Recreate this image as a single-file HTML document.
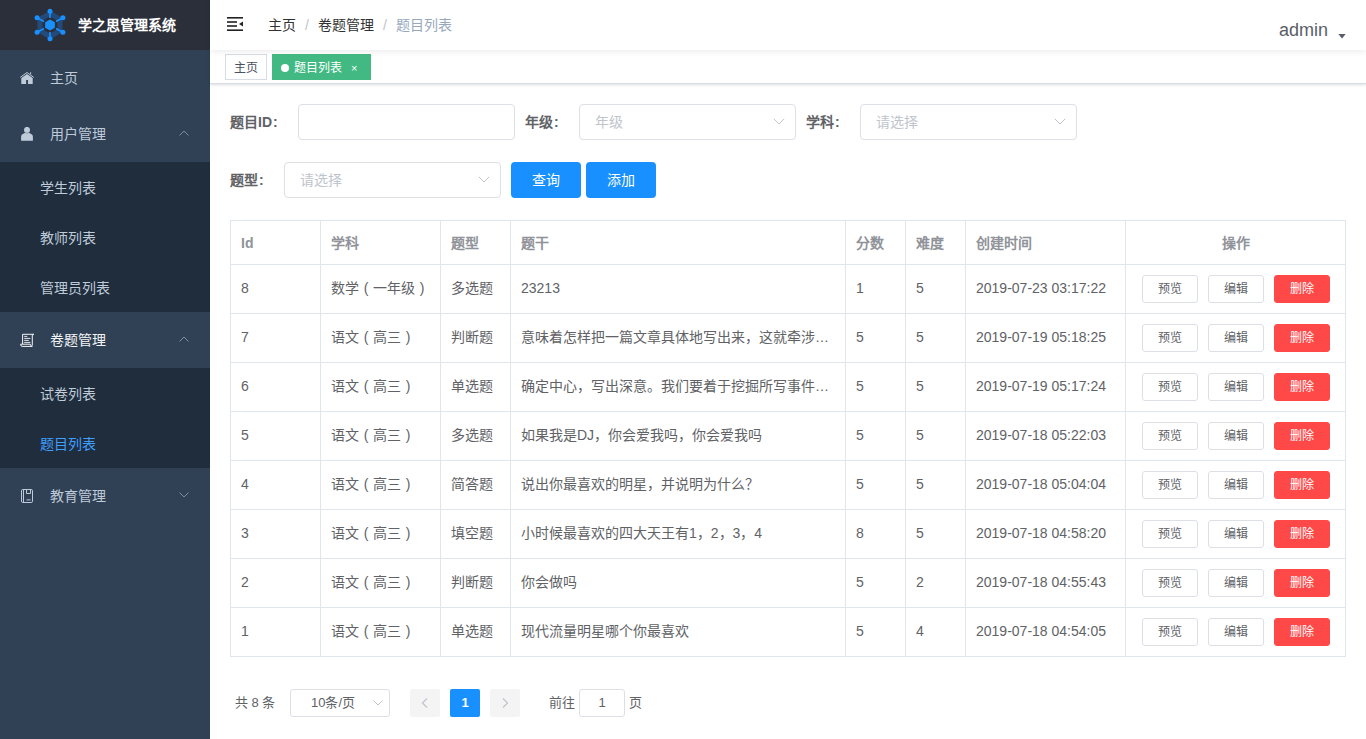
<!DOCTYPE html>
<html lang="zh-CN"><head><meta charset="utf-8"><title>题目列表</title>
<style>
*{box-sizing:border-box;margin:0;padding:0}
html,body{width:1366px;height:739px;overflow:hidden;background:#fff;font-family:"Liberation Sans",sans-serif;-webkit-font-smoothing:antialiased}
.abs{position:absolute}
#sb{position:absolute;left:0;top:0;width:210px;height:739px;background:#304156}
#logo{position:absolute;left:0;top:0;width:210px;height:50px;background:#2b2f3a}
#logo .t{position:absolute;left:78px;top:0;line-height:50px;color:#fff;font-weight:bold;font-size:14px;white-space:nowrap}
.mi{position:absolute;left:0;width:210px;height:56px;line-height:56px;font-size:14px;color:#bfcbd9;white-space:nowrap}
.mi .tx{position:absolute;left:50px;top:0}
.mi svg{position:absolute;left:20px;top:21px}
.mi .ar{position:absolute;left:179px;top:24px}
.si{position:absolute;left:0;width:210px;height:50px;line-height:50px;font-size:14px;color:#bfcbd9;background:#1f2d3d;white-space:nowrap}
.si .tx{position:absolute;left:40px;top:1px}
#nav{position:absolute;z-index:2;left:210px;top:0;width:1156px;height:50px;background:#fff;box-shadow:0 2px 6px rgba(0,21,41,.07)}
#tags{position:absolute;left:210px;top:50px;width:1156px;height:34px;background:#fff;border-bottom:1px solid #d8dce5;box-shadow:0 1px 3px 0 rgba(0,0,0,.12),0 0 3px 0 rgba(0,0,0,.04)}
.tag{position:absolute;top:4px;height:26px;line-height:26px;border:1px solid #d8dce5;font-size:12px;color:#495060;background:#fff;white-space:nowrap}
.tag.act{background:#42b983;border-color:#42b983;color:#fff}
.lbl{position:absolute;font-size:14px;font-weight:bold;color:#606266;line-height:36px;white-space:nowrap}
.inp{position:absolute;height:36px;border:1px solid #dcdfe6;border-radius:4px;background:#fff;font-size:14px;line-height:34px;color:#c0c4cc;padding-left:15px;white-space:nowrap}
.inp svg{position:absolute;right:10px;top:13px}
.btn{position:absolute;height:36px;width:70px;border-radius:4px;background:#1890ff;color:#fff;font-size:14px;line-height:36px;text-align:center}
#tbl{position:absolute;left:230px;top:220px;width:1116px;height:437px;border:1px solid #dfe6ec}
.hl{position:absolute;left:0;width:1114px;height:1px;background:#dfe6ec}
.vl{position:absolute;top:0;width:1px;height:435px;background:#dfe6ec}
.th{position:absolute;top:1px;height:43px;line-height:43px;font-size:14px;font-weight:bold;color:#909399;white-space:nowrap}
.td{position:absolute;height:48px;line-height:46px;font-size:14px;color:#606266;white-space:nowrap;overflow:hidden;text-overflow:ellipsis}
.mb{position:absolute;width:56px;height:28px;border:1px solid #dcdfe6;border-radius:3px;background:#fff;color:#606266;font-size:12px;line-height:26px;text-align:center}
.mb.d{background:#ff4949;border-color:#ff4949;color:#fff}
#pg{position:absolute;left:0;top:689px;width:1366px;height:28px;font-size:13px;color:#606266}
.pl,.pr{display:inline-block;width:14px;text-align:center}
</style></head><body>
<div id="sb">
  <div id="logo">
    <svg class="abs" style="left:30px;top:5px" width="40" height="40" viewBox="0 0 40 40">
      <g transform="translate(20,20)">
        <polygon points="0,-11.5 10,-5.75 10,5.75 0,11.5 -10,5.75 -10,-5.75" fill="none" stroke="#234a78" stroke-width="5"/>
        <polygon points="0,-5.6 4.85,-2.8 4.85,2.8 0,5.6 -4.85,2.8 -4.85,-2.8" fill="#1890ff"/>
        <g stroke="#1890ff" stroke-width="1.6">
          <line x1="0" y1="-7" x2="0" y2="-13.8"/><line x1="0" y1="7" x2="0" y2="13.8"/>
          <line x1="6" y1="-3.5" x2="12.9" y2="-7.3"/><line x1="-6" y1="-3.5" x2="-12.9" y2="-7.3"/>
          <line x1="6" y1="3.5" x2="12.9" y2="7.3"/><line x1="-6" y1="3.5" x2="-12.9" y2="7.3"/>
        </g>
        <g fill="#1890ff">
          <circle cx="0" cy="-13.8" r="2.5"/><circle cx="0" cy="13.8" r="2.5"/>
          <circle cx="12.9" cy="-7.3" r="2.5"/><circle cx="-12.9" cy="-7.3" r="2.5"/>
          <circle cx="12.9" cy="7.3" r="2.5"/><circle cx="-12.9" cy="7.3" r="2.5"/>
        </g>
      </g>
    </svg>
    <div class="t">学之思管理系统</div>
  </div>
  <!-- MENU -->
  <div class="mi" style="top:50px">
    <svg width="14" height="14" viewBox="0 0 14 14"><path d="M0.3 6.3 L7 1.5 L13.7 6.3" fill="none" stroke="#bfcbd9" stroke-width="1"/><path d="M10.1 1.2 L11.1 1.2 L11.1 3.6 L10.1 2.9 Z" fill="#bfcbd9"/><path d="M1.3 7 L7 3 L12.7 7 L12.7 13.1 L8 13.1 L8 9 L6.1 9 L6.1 13.1 L1.3 13.1 Z" fill="#bfcbd9"/></svg>
    <span class="tx">主页</span></div>
  <div class="mi" style="top:106px">
    <svg width="14" height="14" viewBox="0 0 14 14"><circle cx="7" cy="2.9" r="3" fill="#bfcbd9"/><path d="M1.1 13.7 V9.4 Q1.1 8 2.8 7 L5.2 5.7 Q7 6.7 8.8 5.7 L11.2 7 Q12.9 8 12.9 9.4 V13.7 Z" fill="#bfcbd9"/></svg>
    <span class="tx">用户管理</span>
    <svg class="ar" width="10" height="6" viewBox="0 0 10 6"><path d="M0.5 5.5 L5 1 L9.5 5.5" fill="none" stroke="#7f8c9c" stroke-width="1"/></svg></div>
  <div class="si" style="top:162px"><span class="tx">学生列表</span></div>
  <div class="si" style="top:212px"><span class="tx">教师列表</span></div>
  <div class="si" style="top:262px"><span class="tx">管理员列表</span></div>
  <div class="mi" style="top:312px;color:#f4f4f5">
    <svg width="14" height="14" viewBox="0 0 14 14"><path d="M2.6 11.2 V1.3 H13.2 M12.3 1.3 V12.6" fill="none" stroke="#f4f4f5" stroke-width="1"/><path d="M12.6 0.8 L14 0.8 L14 2.6 Z" fill="#f4f4f5"/><path d="M0.6 11.2 H10.3 Q10.6 13.4 12.3 13.4 H2.2 Q0.6 13.4 0.6 11.2 Z" fill="none" stroke="#f4f4f5" stroke-width="1"/><path d="M4.2 3.4 H7.3 M4.2 5.4 H10.4 M4.2 7.4 H8.8 M4.2 9.4 H10.4" stroke="#f4f4f5" stroke-width="0.9"/></svg>
    <span class="tx">卷题管理</span>
    <svg class="ar" width="10" height="6" viewBox="0 0 10 6"><path d="M0.5 5.5 L5 1 L9.5 5.5" fill="none" stroke="#7f8c9c" stroke-width="1"/></svg></div>
  <div class="si" style="top:368px"><span class="tx">试卷列表</span></div>
  <div class="si" style="top:418px;color:#409eff"><span class="tx">题目列表</span></div>
  <div class="mi" style="top:468px">
    <svg width="14" height="14" viewBox="0 0 14 14"><rect x="1.5" y="0.5" width="11" height="13" rx="1.3" fill="none" stroke="#bfcbd9" stroke-width="1"/><path d="M3.5 0.5 V13.5" stroke="#bfcbd9" stroke-width="1"/><path d="M6.5 0.5 V4.5 H10.5 V0.5" fill="none" stroke="#bfcbd9" stroke-width="1"/><path d="M6.5 10.9 H10.5" stroke="#bfcbd9" stroke-width="1"/></svg>
    <span class="tx">教育管理</span>
    <svg class="ar" width="10" height="6" viewBox="0 0 10 6"><path d="M0.5 0.5 L5 5 L9.5 0.5" fill="none" stroke="#7f8c9c" stroke-width="1"/></svg></div>
</div>

<div id="nav">
  <svg class="abs" style="left:17px;top:17px" width="16" height="14" viewBox="0 0 16 14">
    <rect x="0" y="0" width="16" height="1.6" fill="#222"/>
    <rect x="0" y="4.2" width="10" height="1.6" fill="#222"/>
    <rect x="0" y="8.2" width="10" height="1.6" fill="#222"/>
    <rect x="0" y="12.4" width="16" height="1.6" fill="#222"/>
    <path d="M12 7 L16 4.5 L16 9.5 Z" fill="#222"/>
  </svg>
  <div class="abs" style="left:58px;top:0;line-height:50px;font-size:14px;white-space:nowrap;color:#303133">主页<span style="color:#c0c4cc;margin:0 9px">/</span>卷题管理<span style="color:#c0c4cc;margin:0 9px">/</span><span style="color:#97a8be">题目列表</span></div>
  <div class="abs" style="left:1069px;top:0;line-height:60px;font-size:18px;color:#5a5e66;white-space:nowrap">admin</div>
  <svg class="abs" style="left:1128px;top:34px" width="8" height="5" viewBox="0 0 8 5"><path d="M0.3 0 H7.7 L4 4.6 Z" fill="#5a5e66"/></svg>
</div>

<div id="tags">
  <div class="tag" style="left:15px;width:42px;text-align:center">主页</div>
  <div class="tag act" style="left:62px;width:99px;padding-left:8px">
    <span style="display:inline-block;width:8px;height:8px;border-radius:50%;background:#fff;margin-right:5px;vertical-align:0px;position:relative;top:0px"></span>题目列表<span style="display:inline-block;margin-left:9px;font-size:11px;position:relative;top:0px">×</span>
  </div>
</div>

<!-- FORM -->
<div class="lbl" style="left:230px;top:104px">题目ID<span style="margin-left:1px">:</span></div>
<div class="inp" style="left:298px;top:104px;width:217px"></div>
<div class="lbl" style="left:525px;top:104px">年级<span style="margin-left:1px">:</span></div>
<div class="inp" style="left:579px;top:104px;width:217px">年级<svg width="12" height="8" viewBox="0 0 12 8"><path d="M0.8 0.8 L6 6 L11.2 0.8" fill="none" stroke="#c0c4cc" stroke-width="1"/></svg></div>
<div class="lbl" style="left:806px;top:104px">学科<span style="margin-left:1px">:</span></div>
<div class="inp" style="left:860px;top:104px;width:217px">请选择<svg width="12" height="8" viewBox="0 0 12 8"><path d="M0.8 0.8 L6 6 L11.2 0.8" fill="none" stroke="#c0c4cc" stroke-width="1"/></svg></div>
<div class="lbl" style="left:230px;top:162px">题型<span style="margin-left:1px">:</span></div>
<div class="inp" style="left:284px;top:162px;width:217px">请选择<svg width="12" height="8" viewBox="0 0 12 8"><path d="M0.8 0.8 L6 6 L11.2 0.8" fill="none" stroke="#c0c4cc" stroke-width="1"/></svg></div>
<div class="btn" style="left:511px;top:162px">查询</div>
<div class="btn" style="left:586px;top:162px">添加</div>

<!-- TABLE -->
<div id="tbl">
<div class="vl" style="left:89px"></div>
<div class="vl" style="left:209px"></div>
<div class="vl" style="left:279px"></div>
<div class="vl" style="left:614px"></div>
<div class="vl" style="left:674px"></div>
<div class="vl" style="left:734px"></div>
<div class="vl" style="left:894px"></div>
<div class="hl" style="top:43px"></div>
<div class="hl" style="top:92px"></div>
<div class="hl" style="top:141px"></div>
<div class="hl" style="top:190px"></div>
<div class="hl" style="top:239px"></div>
<div class="hl" style="top:288px"></div>
<div class="hl" style="top:337px"></div>
<div class="hl" style="top:386px"></div>
<div class="th" style="left:10px">Id</div>
<div class="th" style="left:100px">学科</div>
<div class="th" style="left:220px">题型</div>
<div class="th" style="left:290px">题干</div>
<div class="th" style="left:625px">分数</div>
<div class="th" style="left:685px">难度</div>
<div class="th" style="left:745px">创建时间</div>
<div class="th" style="left:895px;width:219px;text-align:center">操作</div>
<div class="td" style="left:10px;top:44px;width:69px">8</div>
<div class="td" style="left:100px;top:44px;width:99px">数学<span class="pl">(</span>一年级<span class="pr">)</span></div>
<div class="td" style="left:220px;top:44px;width:49px">多选题</div>
<div class="td" style="left:290px;top:44px;width:314px">23213</div>
<div class="td" style="left:625px;top:44px;width:39px">1</div>
<div class="td" style="left:685px;top:44px;width:39px">5</div>
<div class="td" style="left:745px;top:44px;width:139px">2019-07-23 03:17:22</div>
<div class="mb" style="left:911px;top:54px">预览</div>
<div class="mb" style="left:977px;top:54px">编辑</div>
<div class="mb d" style="left:1043px;top:54px">删除</div>
<div class="td" style="left:10px;top:93px;width:69px">7</div>
<div class="td" style="left:100px;top:93px;width:99px">语文<span class="pl">(</span>高三<span class="pr">)</span></div>
<div class="td" style="left:220px;top:93px;width:49px">判断题</div>
<div class="td" style="left:290px;top:93px;width:314px">意味着怎样把一篇文章具体地写出来，这就牵涉到怎样安排文章的结构</div>
<div class="td" style="left:625px;top:93px;width:39px">5</div>
<div class="td" style="left:685px;top:93px;width:39px">5</div>
<div class="td" style="left:745px;top:93px;width:139px">2019-07-19 05:18:25</div>
<div class="mb" style="left:911px;top:103px">预览</div>
<div class="mb" style="left:977px;top:103px">编辑</div>
<div class="mb d" style="left:1043px;top:103px">删除</div>
<div class="td" style="left:10px;top:142px;width:69px">6</div>
<div class="td" style="left:100px;top:142px;width:99px">语文<span class="pl">(</span>高三<span class="pr">)</span></div>
<div class="td" style="left:220px;top:142px;width:49px">单选题</div>
<div class="td" style="left:290px;top:142px;width:314px">确定中心，写出深意。我们要着于挖掘所写事件的意义</div>
<div class="td" style="left:625px;top:142px;width:39px">5</div>
<div class="td" style="left:685px;top:142px;width:39px">5</div>
<div class="td" style="left:745px;top:142px;width:139px">2019-07-19 05:17:24</div>
<div class="mb" style="left:911px;top:152px">预览</div>
<div class="mb" style="left:977px;top:152px">编辑</div>
<div class="mb d" style="left:1043px;top:152px">删除</div>
<div class="td" style="left:10px;top:191px;width:69px">5</div>
<div class="td" style="left:100px;top:191px;width:99px">语文<span class="pl">(</span>高三<span class="pr">)</span></div>
<div class="td" style="left:220px;top:191px;width:49px">多选题</div>
<div class="td" style="left:290px;top:191px;width:314px">如果我是DJ，你会爱我吗，你会爱我吗</div>
<div class="td" style="left:625px;top:191px;width:39px">5</div>
<div class="td" style="left:685px;top:191px;width:39px">5</div>
<div class="td" style="left:745px;top:191px;width:139px">2019-07-18 05:22:03</div>
<div class="mb" style="left:911px;top:201px">预览</div>
<div class="mb" style="left:977px;top:201px">编辑</div>
<div class="mb d" style="left:1043px;top:201px">删除</div>
<div class="td" style="left:10px;top:240px;width:69px">4</div>
<div class="td" style="left:100px;top:240px;width:99px">语文<span class="pl">(</span>高三<span class="pr">)</span></div>
<div class="td" style="left:220px;top:240px;width:49px">简答题</div>
<div class="td" style="left:290px;top:240px;width:314px">说出你最喜欢的明星，并说明为什么？</div>
<div class="td" style="left:625px;top:240px;width:39px">5</div>
<div class="td" style="left:685px;top:240px;width:39px">5</div>
<div class="td" style="left:745px;top:240px;width:139px">2019-07-18 05:04:04</div>
<div class="mb" style="left:911px;top:250px">预览</div>
<div class="mb" style="left:977px;top:250px">编辑</div>
<div class="mb d" style="left:1043px;top:250px">删除</div>
<div class="td" style="left:10px;top:289px;width:69px">3</div>
<div class="td" style="left:100px;top:289px;width:99px">语文<span class="pl">(</span>高三<span class="pr">)</span></div>
<div class="td" style="left:220px;top:289px;width:49px">填空题</div>
<div class="td" style="left:290px;top:289px;width:314px">小时候最喜欢的四大天王有1，2，3，4</div>
<div class="td" style="left:625px;top:289px;width:39px">8</div>
<div class="td" style="left:685px;top:289px;width:39px">5</div>
<div class="td" style="left:745px;top:289px;width:139px">2019-07-18 04:58:20</div>
<div class="mb" style="left:911px;top:299px">预览</div>
<div class="mb" style="left:977px;top:299px">编辑</div>
<div class="mb d" style="left:1043px;top:299px">删除</div>
<div class="td" style="left:10px;top:338px;width:69px">2</div>
<div class="td" style="left:100px;top:338px;width:99px">语文<span class="pl">(</span>高三<span class="pr">)</span></div>
<div class="td" style="left:220px;top:338px;width:49px">判断题</div>
<div class="td" style="left:290px;top:338px;width:314px">你会做吗</div>
<div class="td" style="left:625px;top:338px;width:39px">5</div>
<div class="td" style="left:685px;top:338px;width:39px">2</div>
<div class="td" style="left:745px;top:338px;width:139px">2019-07-18 04:55:43</div>
<div class="mb" style="left:911px;top:348px">预览</div>
<div class="mb" style="left:977px;top:348px">编辑</div>
<div class="mb d" style="left:1043px;top:348px">删除</div>
<div class="td" style="left:10px;top:387px;width:69px">1</div>
<div class="td" style="left:100px;top:387px;width:99px">语文<span class="pl">(</span>高三<span class="pr">)</span></div>
<div class="td" style="left:220px;top:387px;width:49px">单选题</div>
<div class="td" style="left:290px;top:387px;width:314px">现代流量明星哪个你最喜欢</div>
<div class="td" style="left:625px;top:387px;width:39px">5</div>
<div class="td" style="left:685px;top:387px;width:39px">4</div>
<div class="td" style="left:745px;top:387px;width:139px">2019-07-18 04:54:05</div>
<div class="mb" style="left:911px;top:397px">预览</div>
<div class="mb" style="left:977px;top:397px">编辑</div>
<div class="mb d" style="left:1043px;top:397px">删除</div>
</div>

<!-- PAGINATION -->
<div id="pg">
<div class="abs" style="left:235px;top:0;line-height:28px">共 8 条</div>
<div class="abs" style="left:290px;top:0;width:100px;height:28px;border:1px solid #dcdfe6;border-radius:3px;line-height:26px;padding-left:20px">10条/页<svg class="abs" style="left:82px;top:10px" width="10" height="6" viewBox="0 0 10 6"><path d="M0.5 0.5 L5 5 L9.5 0.5" fill="none" stroke="#c0c4cc" stroke-width="1"/></svg></div>
<div class="abs" style="left:410px;top:0;width:30px;height:28px;background:#f4f4f5;border-radius:2px"><svg class="abs" style="left:11px;top:9px" width="7" height="10" viewBox="0 0 7 10"><path d="M6 0.5 L1.5 5 L6 9.5" fill="none" stroke="#c0c4cc" stroke-width="1.2"/></svg></div>
<div class="abs" style="left:450px;top:0;width:30px;height:28px;background:#1890ff;border-radius:2px;color:#fff;font-weight:bold;text-align:center;line-height:28px">1</div>
<div class="abs" style="left:490px;top:0;width:30px;height:28px;background:#f4f4f5;border-radius:2px"><svg class="abs" style="left:12px;top:9px" width="7" height="10" viewBox="0 0 7 10"><path d="M1 0.5 L5.5 5 L1 9.5" fill="none" stroke="#c0c4cc" stroke-width="1.2"/></svg></div>
<div class="abs" style="left:549px;top:0;line-height:28px">前往</div>
<div class="abs" style="left:579px;top:0;width:46px;height:28px;border:1px solid #dcdfe6;border-radius:3px;line-height:26px;text-align:center">1</div>
<div class="abs" style="left:629px;top:0;line-height:28px">页</div>
</div>
</body></html>
